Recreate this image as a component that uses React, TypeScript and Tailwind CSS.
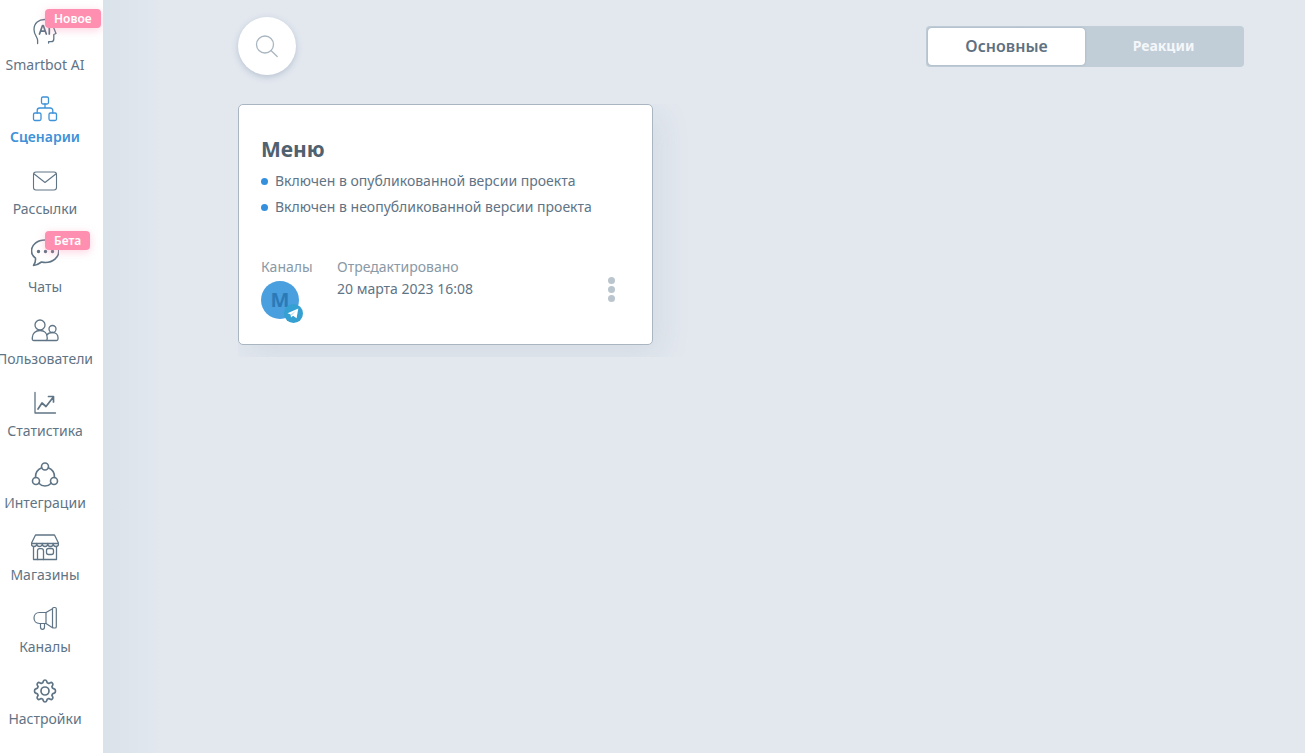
import type { ReactNode } from 'react';
import clsx from 'clsx';

type NavItem = {
    label: string;
    icon: ReactNode;
    badge?: string;
    active?: boolean;
};

const NAV_ITEMS: NavItem[] = [
    {
        label: 'Smartbot AI',
        badge: 'Новое',
        icon: (
            <>
                <path d="M6.600 26.500v-3C6.600 20 3 18 3 12.500 3 6 8 2.500 13.500 2.500c5.500 0 9 3.500 9.300 8.500l2.200 5.500-2.200 1v4.500c0 1.800-1 2.700-2.600 2.700h-2.600v1.300" />
                <path d="M8.500 17l3-8.500h.8l3 8.500M9.600 14.200h4.600M18.300 8.500V17" strokeWidth="1.700" />
            </>
        ),
    },
    {
        label: 'Сценарии',
        active: true,
        icon: (
            <>
                <rect x="10.500" y="2" width="7" height="7" rx="1.500" />
                <rect x="2.500" y="18" width="7.500" height="7.500" rx="1.500" />
                <rect x="18" y="18" width="7.500" height="7.500" rx="1.500" />
                <path d="M14 9v4M6.200 18v-2.500a2.500 2.500 0 0 1 2.500-2.500h10.600a2.500 2.500 0 0 1 2.500 2.500V18" />
            </>
        ),
    },
    {
        label: 'Рассылки',
        icon: (
            <>
                <rect x="2.500" y="5" width="23" height="18" rx="2.500" strokeWidth="1.100" />
                <path d="M3.200 7l10.800 8.500L24.800 7" strokeWidth="1.100" />
            </>
        ),
    },
    {
        label: 'Чаты',
        badge: 'Бета',
        icon: (
            <>
                <path d="M4.500 19.200C2 17.200.5 15 .5 12 .5 5.500 6.500 1 14 1s13.800 4.500 13.800 11S22 23.500 14.500 23.500c-1.400 0-2.800-.2-4-.5C8.500 24.500 6 26.200 2.500 26.500c1.500-1.800 2.200-4.500 2-7.300z" strokeWidth="1.600" />
                <path d="M7.500 12.500h.01M14.500 12.500h.01M21.500 12.500h.01" strokeWidth="3.400" />
            </>
        ),
    },
    {
        label: 'Пользователи',
        icon: (
            <>
                <circle cx="9" cy="8" r="5" />
                <path d="M1.300 22v-1.500c0-4 3.200-7 7.700-7s7.200 3 7.200 7V22c0 1-.5 1.500-1.500 1.500H2.800c-1 0-1.500-.5-1.500-1.500z" />
                <circle cx="21.500" cy="12" r="3.500" />
                <path d="M16 18c1-1.700 3-2.500 5.500-2.500 3.200 0 5.500 2.200 5.500 5V22c0 1-.5 1.500-1.500 1.500H15" />
            </>
        ),
    },
    {
        label: 'Статистика',
        icon: (
            <>
                <path d="M4 3.500v20.500h20.500" />
                <path d="M7 20l4-6 4 3.500 7-9M17.500 7.500h5V13" strokeWidth="1.700" />
            </>
        ),
    },
    {
        label: 'Интеграции',
        icon: (
            <>
                <circle cx="14" cy="5.500" r="3.500" strokeWidth="1.600" />
                <circle cx="5" cy="20" r="3.500" strokeWidth="1.600" />
                <circle cx="23" cy="20" r="3.500" strokeWidth="1.600" />
                <path d="M10.700 6.800C6.800 8.300 4.300 12 4.500 16.500M17.300 6.800c3.900 1.500 6.400 5.200 6.200 9.700M7.800 22.200c3.500 3.700 8.900 3.700 12.400 0" strokeWidth="1.600" />
            </>
        ),
    },
    {
        label: 'Магазины',
        icon: (
            <>
                <path d="M4.500 2h19l4.200 8.500H.3z" />
                <path d="M.3 10.500c0 4 5.480 4 5.480 0 0 4 5.480 4 5.480 0 0 4 5.480 4 5.480 0 0 4 5.480 4 5.480 0 0 4 5.480 4 5.480 0M2.500 13.500v13h23v-13" />
                <path d="M6.500 26.500V18c0-1.500.7-2.300 2-2.300h2c1.300 0 2 .8 2 2.300v8.500" />
                <rect x="15.500" y="15.500" width="7" height="6" rx="2" />
            </>
        ),
    },
    {
        label: 'Каналы',
        icon: (
            <>
                <path d="M15 7.500H8.500C5 7.500 3 10 3 13s2 5.500 5.500 5.500H15M15 7.500l6.500-3.700M15 18.500l6.500 4.200" strokeWidth="1.200" />
                <rect x="21.500" y="2.500" width="3.800" height="20.500" rx="1.300" strokeWidth="1.200" />
                <path d="M15 7.500v11M9.500 18.500V22c0 1.600.8 2.400 2 2.400s2-.8 2-2.400v-3.500" strokeWidth="1.200" />
            </>
        ),
    },
    {
        label: 'Настройки',
        icon: (
            <>
                <circle cx="14" cy="14" r="4" strokeWidth="1.700" />
                <path
                    d="M12.300 4.200c.5-1.600 2.900-1.600 3.400 0l.5 1.600 1.600.7 1.500-.8c1.500-.8 3.200.9 2.400 2.400l-.8 1.500.7 1.600 1.700.7c1.600.5 1.600 3.700 0 4.200l-1.700.7-.7 1.600.8 1.500c.8 1.500-.9 3.200-2.400 2.400l-1.500-.8-1.600.7-.5 1.600c-.5 1.600-2.900 1.600-3.400 0l-.5-1.600-1.600-.7-1.500.8c-1.500.8-3.200-.9-2.400-2.400l.8-1.500-.7-1.600-1.700-.7c-1.600-.5-1.600-3.700 0-4.200l1.700-.7.7-1.600-.8-1.500c-.8-1.500.9-3.200 2.400-2.400l1.500.8 1.600-.7z"
                    strokeWidth="1.700"
                />
            </>
        ),
    },
];

function Sidebar() {
    return (
        <aside className="relative z-10 w-[103px] shrink-0 overflow-x-clip bg-white pt-[17px] pb-5">
            <nav className="flex w-[90px] flex-col gap-5">
                {NAV_ITEMS.map(({ label, icon, badge, active }) => (
                    <a
                        key={label}
                        href="#"
                        className={clsx(
                            'relative flex flex-col items-center text-sm leading-5 whitespace-nowrap',
                            badge ? 'gap-2.5' : 'gap-1',
                            active ? 'font-semibold text-[#3d92d8]' : 'text-[#5f7485]',
                        )}
                    >
                        <svg
                            viewBox="0 0 28 28"
                            className="size-7 shrink-0"
                            fill="none"
                            stroke="currentColor"
                            strokeWidth="1.300"
                            strokeLinecap="round"
                            strokeLinejoin="round"
                            aria-hidden="true"
                        >
                            {icon}
                        </svg>
                        {label}
                        {badge && (
                            <span className="absolute -top-2 left-[45px] rounded bg-[#ff8fb1] px-[9px] text-xs leading-[19px] font-semibold text-white shadow-[0_2px_8px_rgba(255,143,177,0.4)]">
                                {badge}
                            </span>
                        )}
                    </a>
                ))}
            </nav>
        </aside>
    );
}

function Toolbar() {
    return (
        <header className="flex items-center justify-between">
            <button
                type="button"
                aria-label="Поиск"
                className="flex size-[58px] items-center justify-center rounded-full bg-white text-[#a9b6c0] shadow-[0_2px_6px_rgba(120,140,165,0.4)]"
            >
                <svg viewBox="0 0 24 24" className="size-6" fill="none" stroke="currentColor" strokeWidth="1.300" strokeLinecap="round" aria-hidden="true">
                    <circle cx="10" cy="10.500" r="8.500" />
                    <path d="M16.200 16.700l6 5.800" />
                </svg>
            </button>
            <div className="flex h-[41px] w-[318px] rounded bg-[#c1cdd7] p-0.5">
                <button type="button" className="flex-1 rounded bg-white text-base font-semibold text-[#5f7080] shadow-[0_0_2px_rgba(120,145,170,0.6)]">
                    Основные
                </button>
                <button type="button" className="flex-1 rounded text-sm font-bold text-[#f4f7fa]">
                    Реакции
                </button>
            </div>
        </header>
    );
}

function ScenarioCard() {
    return (
        <div className="mt-[29px] w-[450px] overflow-hidden pb-3">
            <article className="w-[415px] rounded-[5px] border border-[#aab5c2] bg-white px-[22px] pt-[30px] pb-[25px] text-sm text-[#5f7485] shadow-[8px_10px_30px_rgba(110,130,150,0.12)]">
                <h2 className="text-[21px] leading-7 font-bold text-[#50616f]">Меню</h2>
                <ul className="mt-[5px] leading-[26px]">
                    {['Включен в опубликованной версии проекта', 'Включен в неопубликованной версии проекта'].map((text) => (
                        <li key={text} className="flex items-center gap-[7px] whitespace-nowrap">
                            <span className="size-[7px] rounded-full bg-[#3490dc]" />
                            {text}
                        </li>
                    ))}
                </ul>
                <div className="mt-[37px] flex items-start leading-5">
                    <div className="w-[76px]">
                        <div className="text-[#8a99a6]">Каналы</div>
                        <div className="relative mt-1 flex size-[38px] items-center justify-center rounded-full bg-[#4a9fde] text-xl font-bold text-[#2b7ab8]">
                            М
                            <svg viewBox="0 0 19 19" className="absolute -right-1 -bottom-1 size-[19px]" aria-hidden="true">
                                <circle cx="9.500" cy="9.500" r="9.500" fill="#35a0d2" />
                                <path d="M3.500 9.300L14.300 4.600l-1.700 9.600-3.500-2.500L7 13.500l-.4-3z" fill="#fff" />
                                <path d="M6.800 10.300l5-3.300-4 4.200" fill="#b9dcee" />
                            </svg>
                        </div>
                    </div>
                    <div>
                        <div className="text-[#8a99a6]">Отредактировано</div>
                        <div className="mt-0.5">20 марта 2023 16:08</div>
                    </div>
                    <button type="button" aria-label="Действия" className="mt-5 mr-[9px] ml-auto flex w-5 flex-col items-center gap-0.5">
                        <span className="size-[7px] rounded-full bg-[#bac5cd]" />
                        <span className="size-[7px] rounded-full bg-[#bac5cd]" />
                        <span className="size-[7px] rounded-full bg-[#bac5cd]" />
                    </button>
                </div>
            </article>
        </div>
    );
}

export default function App() {
    return (
        <div className="flex min-h-screen bg-[#e3e8ef] font-['Noto_Sans','Open_Sans',sans-serif]">
            <Sidebar />
            <main className="min-w-0 flex-1 bg-linear-to-r from-[#dae2ea] to-[#e3e8ef] to-[60px] pt-[17px] pr-[61px] pl-[135px]">
                <Toolbar />
                <ScenarioCard />
            </main>
        </div>
    );
}
